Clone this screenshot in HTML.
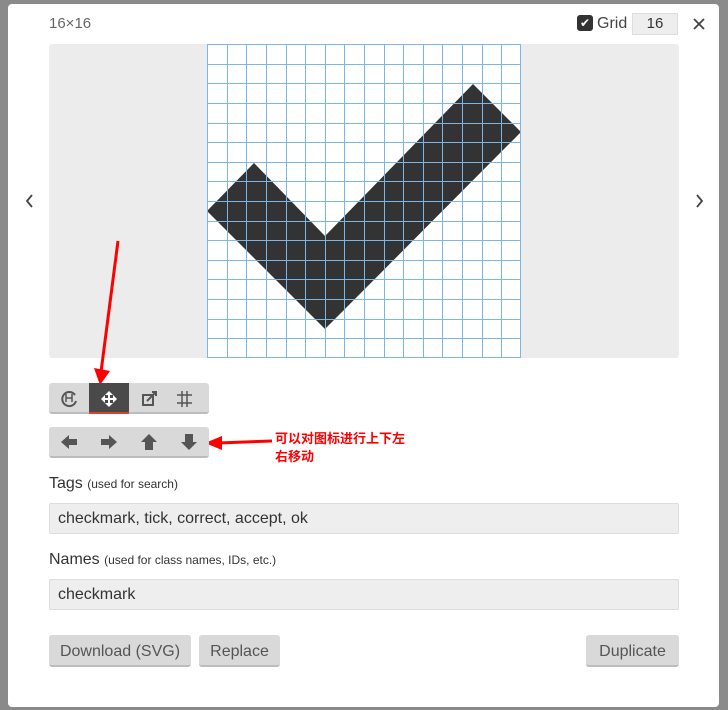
<!DOCTYPE html>
<html><head><meta charset="utf-8"><style>
body{margin:0;width:728px;height:710px;background:#8a8a8a;position:relative;overflow:hidden;font-family:"Liberation Sans","Noto Sans CJK SC",sans-serif;color:#444}
.modal{position:absolute;left:8px;top:4px;width:711px;height:703px;background:#fff;border-radius:4px}
.a{position:absolute}
.btn{position:absolute;background:#d9d9d9;border-bottom:2px solid #bcbcbc;border-radius:3px;font-size:16px;color:#555;text-align:center;box-sizing:border-box}
.inp{position:absolute;left:49px;width:630px;height:31px;background:#eee;border:1px solid #ddd;box-sizing:border-box;font-size:16px;color:#333;padding:6px 8px;border-radius:2px}
.lbl{position:absolute;left:49px;font-size:16px;color:#333}
.lbl small{font-size:12px}
</style></head><body>
<div class="modal"></div>
<svg class="a" style="left:0;top:0" width="728" height="710">
<rect x="49" y="44" width="630" height="314" rx="3" fill="#ececec"/>
<path d="M694 19l10 10M704 19l-10 10" stroke="#444" stroke-width="1.8"/>
<rect x="207" y="44" width="314" height="314" fill="#fff"/>
<polygon points="207,211 254,163 325,236 473,84 521,132 325,329" fill="#333"/>
<g stroke="#7ab6e6" stroke-width="1">
<path d="M207.5 44v314M227.5 44v314M246.5 44v314M266.5 44v314M286.5 44v314M305.5 44v314M325.5 44v314M344.5 44v314M364.5 44v314M384.5 44v314M403.5 44v314M423.5 44v314M442.5 44v314M462.5 44v314M482.5 44v314M501.5 44v314M520.5 44v314"/>
<path d="M207 44.5h314M207 64.5h314M207 83.5h314M207 103.5h314M207 123.5h314M207 142.5h314M207 162.5h314M207 181.5h314M207 201.5h314M207 221.5h314M207 240.5h314M207 260.5h314M207 279.5h314M207 299.5h314M207 319.5h314M207 338.5h314M207 357.5h314"/>
</g>
<path d="M32 195l-5 6 5 6M697 195l5 6-5 6" stroke="#444" stroke-width="1.8" fill="none"/>
<path d="M118 241L101 372" stroke="#f00" stroke-width="3"/>
<polygon points="94,368 110,371 100,385" fill="#f00"/>
<path d="M272 441L218 443" stroke="#f00" stroke-width="3"/>
<polygon points="205,443 222,436 222,450" fill="#f00"/>
</svg>
<div class="a" style="left:49px;top:15px;font-size:15px;color:#666">16×16</div>
<div class="a" style="left:577px;top:15px;width:16px;height:16px;background:#333;border-radius:3px;color:#fff;font-size:12px;text-align:center;line-height:16px">✔</div>
<div class="a" style="left:597px;top:15px;font-size:16px;color:#444">Grid</div>
<div class="a" style="left:632px;top:13px;width:46px;height:22px;background:#eee;border:1px solid #ddd;box-sizing:border-box;text-align:center;font-size:15px;line-height:20px;color:#333">16</div>
<div class="btn" style="left:49px;top:383px;width:160px;height:31px"></div>
<div class="a" style="left:89px;top:383px;width:40px;height:29px;background:#4a4a4a;border-bottom:2px solid #e04030"></div>
<svg class="a" style="left:49px;top:383px" width="160" height="31">
<g stroke="#555" stroke-width="2" fill="none"><path d="M26 12a7 7 0 1 0 1 6"/><path d="M17 11v8M23 11v8M17 15h6" stroke-width="1.5"/><rect x="94" y="12" width="10" height="10"/><path d="M98 18l9-9M103 9h4v4"/><path d="M133 8v16M138 8v16M128 12h15M128 20h15" stroke-width="1.5"/></g>
<path d="M60 8l4 4h-3v3h3v-3l4 4-4 4v-3h-3v3h3l-4 4-4-4h3v-3h-3v3l-4-4 4-4v3h3v-3h-3z" fill="#fff"/>
</svg>
<div class="btn" style="left:49px;top:427px;width:160px;height:31px"></div>
<svg class="a" style="left:49px;top:427px" width="160" height="31">
<g fill="#555"><polygon points="12,15 20,8 20,12 28,12 28,18 20,18 20,22"/><polygon points="68,15 60,8 60,12 52,12 52,18 60,18 60,22"/><polygon points="100,7 108,15 104,15 104,23 96,23 96,15 92,15"/><polygon points="140,23 148,15 144,15 144,7 136,7 136,15 132,15"/></g>
</svg>
<div class="a" style="left:275px;top:430px;font-size:13px;font-weight:bold;color:#f00;line-height:18px">可以对图标进行上下左<br>右移动</div>
<div class="lbl" style="top:475px">Tags <small>(used for search)</small></div>
<div class="inp" style="top:503px">checkmark, tick, correct, accept, ok</div>
<div class="lbl" style="top:551px">Names <small>(used for class names, IDs, etc.)</small></div>
<div class="inp" style="top:579px">checkmark</div>
<div class="btn" style="left:49px;top:635px;width:142px;height:32px;line-height:33px">Download (SVG)</div>
<div class="btn" style="left:199px;top:635px;width:81px;height:32px;line-height:33px">Replace</div>
<div class="btn" style="left:586px;top:635px;width:93px;height:32px;line-height:33px">Duplicate</div>
</body></html>
